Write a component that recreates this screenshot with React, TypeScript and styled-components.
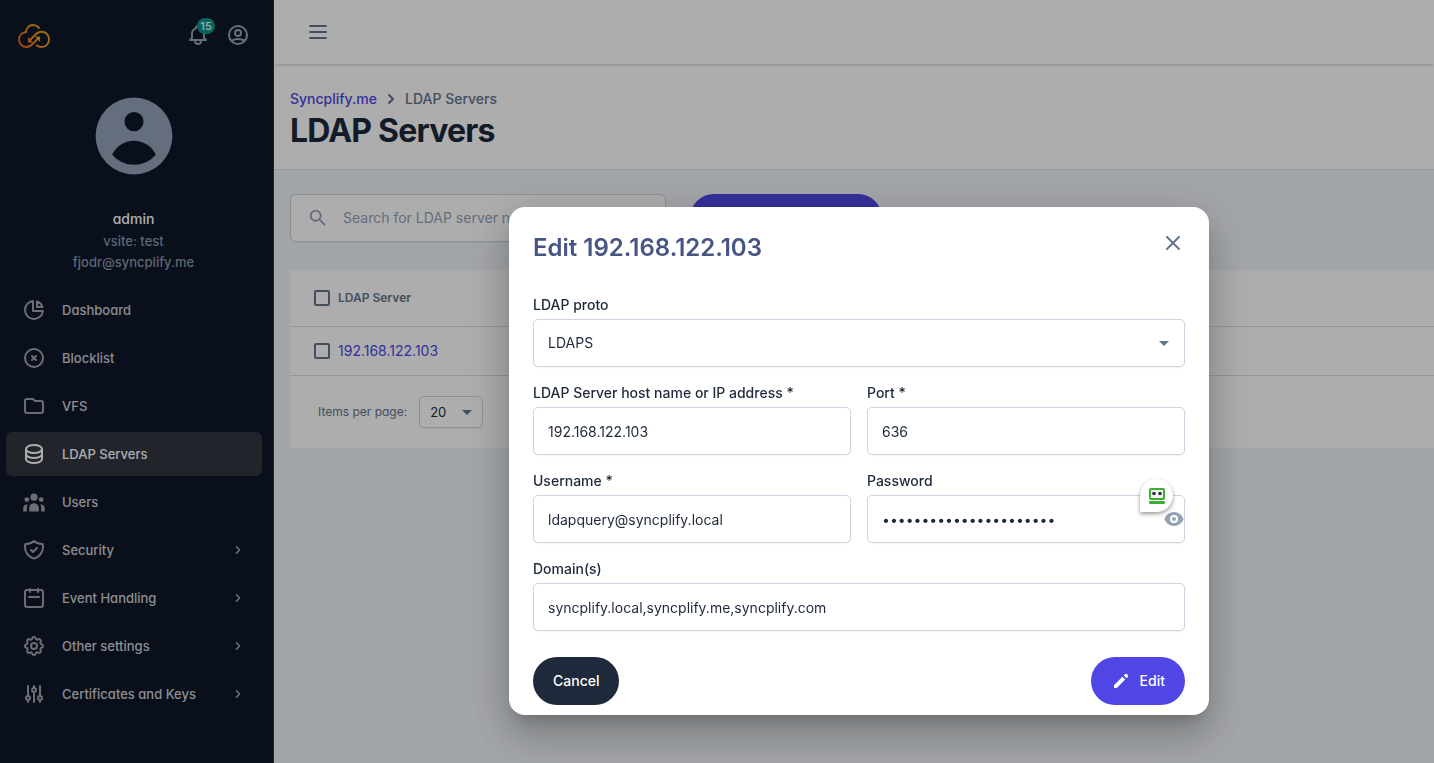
import React from "react";
import styled, { createGlobalStyle } from "styled-components";
import {
  HiOutlineBell,
  HiOutlineUserCircle,
  HiUserCircle,
  HiOutlineChartPie,
  HiOutlineXCircle,
  HiOutlineFolder,
  HiOutlineDatabase,
  HiUserGroup,
  HiOutlineShieldCheck,
  HiOutlineCog,
  HiOutlineAdjustments,
  HiChevronRight,
  HiOutlineMenu,
  HiOutlineX,
  HiPencil,
  HiEye,
} from "react-icons/hi";
import { MdSearch } from "react-icons/md";

const GlobalStyle = createGlobalStyle`
  *, *::before, *::after { box-sizing: border-box; }
  body {
    margin: 0;
    background: #f1f5f9;
    color: #1e293b;
    font-family: Inter, "Liberation Sans", sans-serif;
    font-size: 14px;
    line-height: 20px;
  }
  button, input, select { font: inherit; color: inherit; margin: 0; }
  button { cursor: pointer; border: 0; padding: 0; background: none; }
  a { text-decoration: none; }
  h1, h2, p, ul, ol { margin: 0; padding: 0; }
  ul, ol { list-style: none; }
`;

const Shell = styled.div`
  display: grid;
  grid-template-columns: 274px minmax(0, 1fr);
  min-height: 100vh;
`;

/* Sidebar */

const Sidebar = styled.aside`
  display: flex;
  flex-direction: column;
  background: #0f172a;
  border-right: 1px solid #283042;
  color: #94a3b8;
  font-feature-settings: "cv11";
`;

const SidebarTop = styled.div`
  display: flex;
  align-items: center;
  justify-content: space-between;
  height: 70px;
  padding: 0 23px 0 18px;
`;

const SidebarActions = styled.div`
  display: flex;
  gap: 16px;
`;

const IconButton = styled.button`
  position: relative;
  display: flex;
  color: inherit;
`;

const Badge = styled.span`
  position: absolute;
  top: -5px;
  right: -5px;
  min-width: 18px;
  height: 16px;
  border-radius: 8px;
  background: #0d9488;
  color: #f0fdfa;
  font-size: 11px;
  font-weight: 500;
  line-height: 16px;
  text-align: center;
`;

const Profile = styled.div`
  display: flex;
  flex-direction: column;
  align-items: center;
  padding: 18px 6px 15px 0;
  font-size: 13px;
  font-weight: 500;
  line-height: 21px;
  color: #8b98ac;
`;

const ProfileName = styled.p`
  margin-top: 24px;
  padding-bottom: 2px;
  color: #fff;
  font-size: 14px;
  line-height: 21px;
`;

const NavList = styled.ul`
  display: flex;
  flex-direction: column;
  gap: 4px;
  padding: 0 11px 0 6px;
`;

const NavLink = styled.a<{ $active?: boolean }>`
  display: flex;
  align-items: center;
  gap: 16px;
  height: 44px;
  padding: 0 16px;
  border-radius: 6px;
  background: ${(p) => (p.$active ? "#313540" : "transparent")};
  color: ${(p) => (p.$active ? "#fff" : "#cfd1d4")};
  font-size: 13px;
  font-weight: 500;

  > svg:first-child { color: ${(p) => (p.$active ? "#fff" : "#9fa2aa")}; }
`;

const NavLabel = styled.span`
  flex: 1;
`;

const NavArrow = styled(HiChevronRight)`
  color: #94a3b8;
`;

/* Main area */

const Main = styled.main`
  display: flex;
  flex-direction: column;
`;

const Toolbar = styled.div`
  position: relative;
  display: flex;
  align-items: center;
  height: 64px;
  padding: 0 32px;
  background: #fff;
  color: #64748b;
  box-shadow: 0 1px 3px rgba(0, 0, 0, 0.2);
`;

const PageHeader = styled.header`
  padding: 25px 16px 16px;
  background: #fff;
  border-bottom: 1px solid #dbe2ea;
`;

const Breadcrumb = styled.ol`
  display: flex;
  align-items: center;
  gap: 4px;
  color: #64748b;
  font-weight: 500;

  li { display: flex; align-items: center; gap: 4px; }
`;

const CrumbLink = styled.a`
  color: #4f46e5;
`;

const PageTitle = styled.h1`
  font-size: 32px;
  font-weight: 700;
  line-height: 44px;
  letter-spacing: -0.025em;
`;

const Actions = styled.div`
  display: flex;
  gap: 24px;
  padding: 24px 16px 28px;
`;

const SearchBox = styled.label`
  display: flex;
  align-items: center;
  gap: 14px;
  width: 376px;
  height: 48px;
  padding: 0 16px;
  border: 1px solid #cbd5e1;
  border-radius: 6px;
  background: #fff;
  color: #94a3b8;
  box-shadow: 0 1px 2px rgba(0, 0, 0, 0.05);
`;

const SearchInput = styled.input`
  flex: 1;
  min-width: 0;
  padding: 0;
  border: 0;
  outline: 0;
  background: none;

  &::placeholder { color: #94a3b8; opacity: 1; }
`;

const PillButton = styled.button<{ $tone: "dark" | "primary"; $wide?: boolean }>`
  display: flex;
  align-items: center;
  justify-content: center;
  gap: 9px;
  height: 48px;
  min-width: ${(p) => (p.$wide ? "192px" : "0")};
  padding: 0 20px;
  border-radius: 24px;
  background: ${(p) => (p.$tone === "dark" ? "#1e293b" : "#4f46e5")};
  color: #fff;
  font-weight: 500;
`;

const Card = styled.section`
  margin-left: 16px;
  background: #fff;
  color: #64748b;
`;

const Table = styled.table`
  width: 100%;
  border-collapse: separate;
  border-spacing: 0;
  text-align: left;

  th, td { padding: 0; border-bottom: 1px solid #dcdce8; }
  th { height: 57px; font-size: 12px; font-weight: 600; }
  td { height: 49px; font-feature-settings: "cv11"; }
  th:first-child, td:first-child { width: 48px; padding-left: 24px; }
`;

const Checkbox = styled.input`
  display: block;
  appearance: none;
  width: 16px;
  height: 16px;
  border: 2px solid #64748b;
  border-radius: 2px;
`;

const Paginator = styled.div`
  display: flex;
  align-items: center;
  gap: 12px;
  height: 72px;
  padding: 0 28px;
  font-size: 12px;
  font-feature-settings: "cv11";
`;

/* Form controls */

const SelectWrap = styled.div`
  position: relative;
`;

const Caret = styled.span<{ $right: number }>`
  position: absolute;
  top: 50%;
  right: ${(p) => p.$right}px;
  margin-top: -2px;
  border: 5px solid transparent;
  border-top-color: #64748b;
  border-bottom: 0;
  pointer-events: none;
`;

const Control = styled.input`
  display: block;
  width: 100%;
  height: 48px;
  padding: 0 14px;
  border: 1px solid #cbd5e1;
  border-radius: 5px;
  outline: 0;
  appearance: none;
  background: #fff;
  color: #1e293b;
  box-shadow: 0 1px 2px rgba(0, 0, 0, 0.05);
`;

const SmallSelect = styled(Control)`
  width: 64px;
  height: 32px;
  padding: 0 10px;
  font-size: 13px;
`;

const FieldBlock = styled.div<{ $span?: boolean }>`
  grid-column: ${(p) => (p.$span ? "1 / -1" : "auto")};
`;

const FieldLabel = styled.label`
  display: block;
  padding: 4px 0;
  font-weight: 500;
`;

/* Dialog */

const Backdrop = styled.div`
  position: fixed;
  inset: 0;
  display: flex;
  align-items: center;
  justify-content: center;
  padding: 159px 0 0 284px;
  background: rgba(0, 0, 0, 0.32);
`;

const Dialog = styled.form`
  width: 700px;
  max-width: 100%;
  padding: 24px 24px 10px;
  border-radius: 16px;
  background: #fff;
  box-shadow: 0 11px 15px -7px rgba(0, 0, 0, 0.2), 0 24px 38px 3px rgba(0, 0, 0, 0.14),
    0 9px 46px 8px rgba(0, 0, 0, 0.12);
`;

const DialogHead = styled.div`
  display: flex;
  justify-content: space-between;
  align-items: flex-start;
  margin-bottom: 26px;
  color: #475585;
`;

const DialogTitle = styled.h2`
  font-size: 24px;
  font-weight: 600;
  line-height: 34px;
`;

const Fields = styled.div`
  display: grid;
  grid-template-columns: 1fr 1fr;
  gap: 12px 16px;
  margin-bottom: 26px;
`;

const DialogFoot = styled.div`
  display: flex;
  justify-content: space-between;
`;

const PasswordWrap = styled.div`
  position: relative;
`;

const RevealButton = styled.button`
  position: absolute;
  top: 14px;
  right: 1px;
  display: flex;
  color: #94a3b8;
`;

const AutofillBubble = styled.button`
  position: absolute;
  top: -16px;
  right: 12px;
  display: flex;
  align-items: center;
  justify-content: center;
  width: 33px;
  height: 33px;
  border-radius: 17px 17px 17px 0;
  background: #fff;
  box-shadow: 0 2px 4px rgba(0, 0, 0, 0.4);
`;

const CloseButton = styled(IconButton)`
  color: #64748b;
`;

const Logo = () => (
  <svg width="32" height="28" viewBox="0 -3 32 28" fill="none" role="img" aria-label="Syncplify.me">
    <defs>
      <linearGradient id="logo" x1="0" y1="24" x2="32" y2="4" gradientUnits="userSpaceOnUse">
        <stop stopColor="#f0561d" />
        <stop offset="0.5" stopColor="#f0901c" />
        <stop offset="1" stopColor="#eeac14" />
      </linearGradient>
    </defs>
    <g stroke="url(#logo)" strokeWidth="1.9">
      <path d="M21.5 4.6C19 .6 13 -.2 10 3.2 8.4 4.8 8 6.3 8 8 3.500 8.500 1 12 1 15.600 1 20 4.500 23 8.500 23c3 0 4.700-1.300 6.500-3.300l6-6.200" />
      <path d="M11 17l6-6c1.800-2 3.500-3.300 6.500-3.300 4.300 0 7.500 3.300 7.500 7.700S27.800 23 23.500 23c-2 0-3.800-.6-5.300-2" />
    </g>
    <path d="M10 13v5.500h5zM22 18v-5.500h-5z" fill="url(#logo)" />
  </svg>
);

const CalendarIcon = () => (
  <svg width="24" height="24" viewBox="0 0 24 24" fill="none" stroke="currentColor" strokeWidth="2" strokeLinecap="round">
    <rect x="3" y="4" width="18" height="17" rx="2" />
    <path d="M8 3v3M16 3v3M7 11h10" />
  </svg>
);

const RobotIcon = () => (
  <svg width="16" height="16" viewBox="0 0 16 16">
    <rect x="1" y="1" width="14" height="10" rx="1" fill="#f4f4f4" stroke="#3aae35" strokeWidth="2" />
    <circle cx="5" cy="5.500" r="1.800" fill="#333" />
    <circle cx="11" cy="5.500" r="1.800" fill="#333" />
    <rect y="13" width="16" height="3" rx="1" fill="#3aae35" />
  </svg>
);

const navItems = [
  { label: "Dashboard", icon: <HiOutlineChartPie size={24} /> },
  { label: "Blocklist", icon: <HiOutlineXCircle size={24} /> },
  { label: "VFS", icon: <HiOutlineFolder size={24} /> },
  { label: "LDAP Servers", icon: <HiOutlineDatabase size={24} />, active: true },
  { label: "Users", icon: <HiUserGroup size={24} /> },
  { label: "Security", icon: <HiOutlineShieldCheck size={24} />, group: true },
  { label: "Event Handling", icon: <CalendarIcon />, group: true },
  { label: "Other settings", icon: <HiOutlineCog size={24} />, group: true },
  { label: "Certificates and Keys", icon: <HiOutlineAdjustments size={24} />, group: true },
];

type FieldProps = { id: string; label: string; value: string; span?: boolean };

const Field = ({ id, label, value, span }: FieldProps) => (
  <FieldBlock $span={span}>
    <FieldLabel htmlFor={id}>{label}</FieldLabel>
    <Control id={id} defaultValue={value} />
  </FieldBlock>
);

export default function App() {
  return (
    <>
      <GlobalStyle />
      <Shell>
        <Sidebar>
          <SidebarTop>
            <Logo />
            <SidebarActions>
              <IconButton aria-label="Notifications">
                <HiOutlineBell size={24} />
                <Badge>15</Badge>
              </IconButton>
              <IconButton aria-label="Account">
                <HiOutlineUserCircle size={24} />
              </IconButton>
            </SidebarActions>
          </SidebarTop>
          <Profile>
            <HiUserCircle size={96} color="#94a3b8" />
            <ProfileName>admin</ProfileName>
            <p>vsite: test</p>
            <p>fjodr@syncplify.me</p>
          </Profile>
          <nav>
            <NavList>
              {navItems.map((item) => (
                <li key={item.label}>
                  <NavLink href="#" $active={item.active}>
                    {item.icon}
                    <NavLabel>{item.label}</NavLabel>
                    {item.group && <NavArrow size={16} />}
                  </NavLink>
                </li>
              ))}
            </NavList>
          </nav>
        </Sidebar>

        <Main>
          <Toolbar>
            <IconButton aria-label="Toggle navigation">
              <HiOutlineMenu size={24} />
            </IconButton>
          </Toolbar>
          <PageHeader>
            <Breadcrumb>
              <li>
                <CrumbLink href="#">Syncplify.me</CrumbLink>
              </li>
              <li>
                <HiChevronRight size={20} />
                LDAP Servers
              </li>
            </Breadcrumb>
            <PageTitle>LDAP Servers</PageTitle>
          </PageHeader>
          <Actions>
            <SearchBox>
              <MdSearch size={22} />
              <SearchInput aria-label="Search" placeholder="Search for LDAP server name" />
            </SearchBox>
            <PillButton $tone="primary" $wide aria-label="Add LDAP server" />
          </Actions>
          <Card>
            <Table>
              <thead>
                <tr>
                  <th>
                    <Checkbox type="checkbox" aria-label="Select all" />
                  </th>
                  <th>LDAP Server</th>
                </tr>
              </thead>
              <tbody>
                <tr>
                  <td>
                    <Checkbox type="checkbox" aria-label="Select 192.168.122.103" />
                  </td>
                  <td>
                    <CrumbLink href="#">192.168.122.103</CrumbLink>
                  </td>
                </tr>
              </tbody>
            </Table>
            <Paginator>
              <label htmlFor="page-size">Items per page:</label>
              <SelectWrap>
                <SmallSelect as="select" id="page-size">
                  <option>20</option>
                </SmallSelect>
                <Caret $right={11} />
              </SelectWrap>
            </Paginator>
          </Card>
        </Main>
      </Shell>

      <Backdrop>
        <Dialog role="dialog" aria-modal="true" aria-labelledby="dialog-title">
          <DialogHead>
            <DialogTitle id="dialog-title">Edit 192.168.122.103</DialogTitle>
            <CloseButton type="button" aria-label="Close">
              <HiOutlineX size={24} />
            </CloseButton>
          </DialogHead>
          <Fields>
            <FieldBlock $span>
              <FieldLabel htmlFor="proto">LDAP proto</FieldLabel>
              <SelectWrap>
                <Control as="select" id="proto">
                  <option>LDAPS</option>
                </Control>
                <Caret $right={16} />
              </SelectWrap>
            </FieldBlock>
            <Field id="host" label="LDAP Server host name or IP address *" value="192.168.122.103" />
            <Field id="port" label="Port *" value="636" />
            <Field id="user" label="Username *" value="ldapquery@syncplify.local" />
            <FieldBlock>
              <FieldLabel htmlFor="password">Password</FieldLabel>
              <PasswordWrap>
                <Control id="password" type="password" defaultValue="0123456789012345678901" />
                <RevealButton type="button" aria-label="Show password">
                  <HiEye size={20} />
                </RevealButton>
                <AutofillBubble type="button" aria-label="Autofill">
                  <RobotIcon />
                </AutofillBubble>
              </PasswordWrap>
            </FieldBlock>
            <Field id="domains" label="Domain(s)" value="syncplify.local,syncplify.me,syncplify.com" span />
          </Fields>
          <DialogFoot>
            <PillButton type="button" $tone="dark">
              Cancel
            </PillButton>
            <PillButton type="button" $tone="primary">
              <HiPencil size={20} />
              Edit
            </PillButton>
          </DialogFoot>
        </Dialog>
      </Backdrop>
    </>
  );
}
